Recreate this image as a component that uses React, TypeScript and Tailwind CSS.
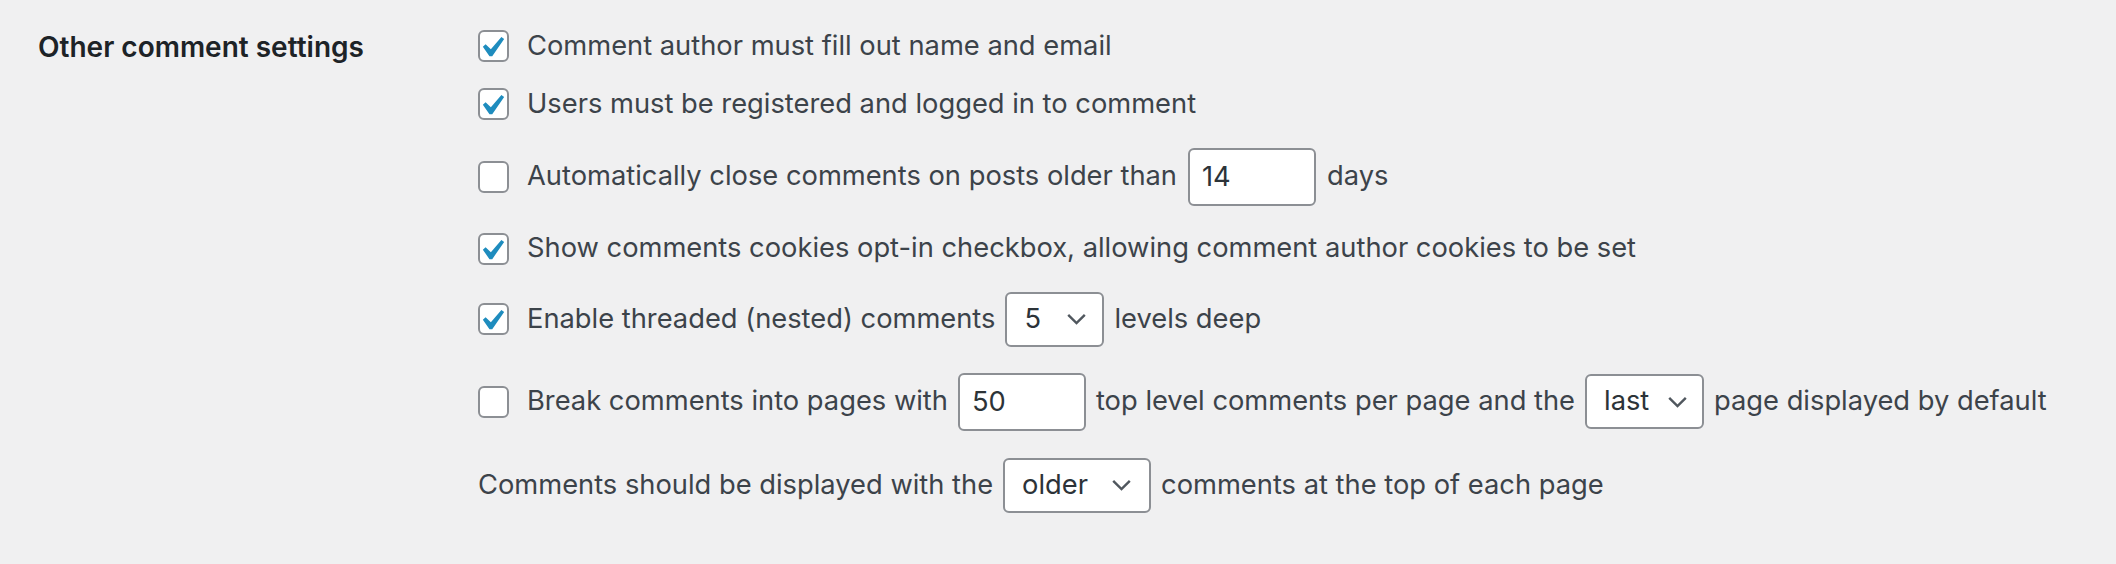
import React from 'react'

const font = { fontFamily: 'Inter, "Noto Sans", sans-serif' }

function Check({ checked }: { checked?: boolean }) {
  return (
    <span className="relative shrink-0 w-[31px] h-[32px] rounded-[6px] border-2 border-[#8c8f94] bg-white">
      {checked && (
        <svg
          viewBox="0 0 20 20"
          className="absolute left-[-9px] top-[-5px] w-[41px] h-[41px]"
        >
          <path
            d="M14.83 4.89l1.34.94-5.81 8.38H9.02L5.78 9.67l1.34-1.25 2.57 2.4z"
            fill="#1e8cbe"
          />
        </svg>
      )}
    </span>
  )
}

function Chevron() {
  return (
    <svg viewBox="0 0 22 13" className="w-[21px] h-[12px] shrink-0">
      <polyline
        points="2,2 11,11 20,2"
        fill="none"
        stroke="#50575e"
        strokeWidth="2.6"
      />
    </svg>
  )
}

function Select({ value, width, pr }: { value: string; width: string; pr: string }) {
  return (
    <div
      className={`inline-flex shrink-0 items-center justify-between h-[55px] pl-[17px] ${pr} ${width} rounded-[6px] border-2 border-[#8c8f94] bg-white text-[#2c3338]`}
    >
      <span>{value}</span>
      <Chevron />
    </div>
  )
}

function NumberInput({ value }: { value: string }) {
  return (
    <input
      type="text"
      defaultValue={value}
      className="shrink-0 w-[128px] h-[58px] pl-[12px] rounded-[6px] border-2 border-[#8c8f94] bg-white text-[#2c3338] outline-none"
    />
  )
}

export default function App() {
  return (
    <div
      className="w-[2116px] h-[564px] bg-[#f0f0f1] text-[27.3px] text-[#3c434a] flex pl-[38px] pt-[17px]"
      style={font}
    >
      {/* label column */}
      <div className="w-[440px] shrink-0">
        <div className="h-[60px] flex items-center text-[28px] font-semibold text-[#1d2327]">
          Other comment settings
        </div>
      </div>

      {/* options */}
      <div className="flex flex-col">
        <label className="h-[58px] flex items-center gap-[18px]">
          <Check checked />
          <span>Comment author must fill out name and email</span>
        </label>
        <label className="h-[58px] flex items-center gap-[18px]">
          <Check checked />
          <span>Users must be registered and logged in to comment</span>
        </label>
        <label className="h-[87px] flex items-center gap-[18px]">
          <Check />
          <span className="flex items-center gap-[11px]">
            Automatically close comments on posts older than
            <NumberInput value="14" />
            days
          </span>
        </label>
        <label className="h-[57px] flex items-center gap-[18px]">
          <Check checked />
          <span>Show comments cookies opt-in checkbox, allowing comment author cookies to be set</span>
        </label>
        <label className="h-[84px] flex items-center gap-[18px]">
          <Check checked />
          <span className="flex items-center gap-[10px]">
            Enable threaded (nested) comments
            <Select value="5" width="w-[99px]" pr="pr-[15px]" />
            levels deep
          </span>
        </label>
        <label className="h-[81px] flex items-center gap-[18px]">
          <Check />
          <span className="flex items-center gap-[10px]">
            Break comments into pages with
            <NumberInput value="50" />
            top level comments per page and the
            <Select value="last" width="w-[119px]" pr="pr-[14px]" />
            page displayed by default
          </span>
        </label>
        <div className="h-[86px] flex items-center gap-[10px]">
          Comments should be displayed with the
          <Select value="older" width="w-[148px]" pr="pr-[17px]" />
          comments at the top of each page
        </div>
      </div>
    </div>
  )
}
